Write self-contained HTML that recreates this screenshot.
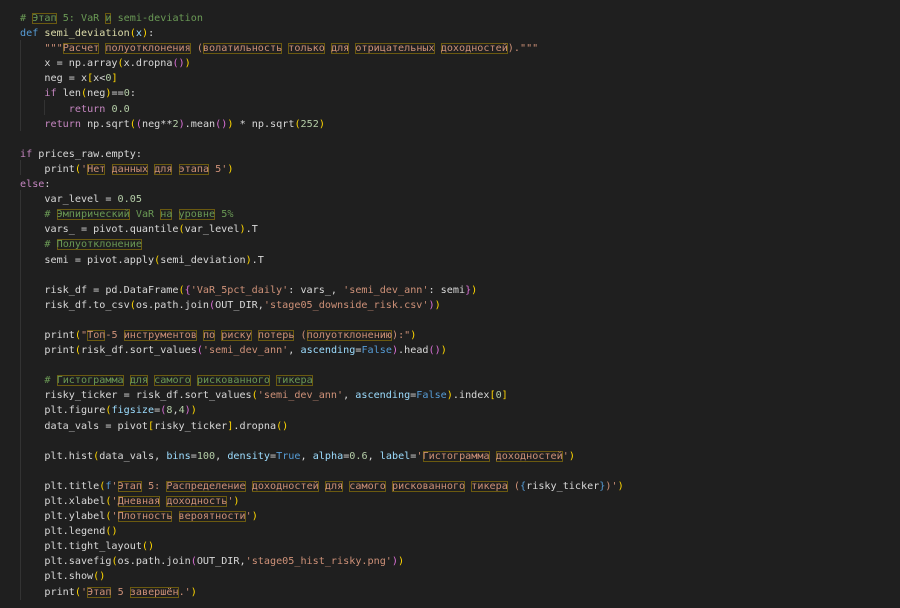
<!DOCTYPE html>
<html><head><meta charset="utf-8"><style>
body{margin:0;background:#1f1f1f;width:900px;height:608px;overflow:hidden}
pre{margin:0;padding:11px 0 0 20px;font-family:"DejaVu Sans Mono","Liberation Mono",monospace;font-size:10.13px;line-height:15.1px;color:#d8d8d8;position:relative}
.k{color:#569cd6}.c{color:#c586c0}.f{color:#dcdcaa}.s{color:#ce9178}.m{color:#6a9955}.n{color:#b5cea8}.p{color:#9cdcfe}
.b1{color:#ffd700}.b2{color:#da70d6}.b3{color:#179fff}
i{font-style:normal;box-shadow:inset 0 0 0 1px #6b5a10}
.g{position:absolute;width:1px;background:#333}
</style></head><body>
<div class="g" style="left:20px;top:40px;height:91px"></div>
<div class="g" style="left:44px;top:100px;height:15px"></div>
<div class="g" style="left:20px;top:160px;height:15px"></div>
<div class="g" style="left:20px;top:190px;height:410px"></div>
<pre><span class="m"># <i>Этап</i> 5: VaR <i>и</i> semi-deviation</span>
<span class="k">def</span> <span class="f">semi_deviation</span><span class="b1">(</span><span class="p">x</span><span class="b1">)</span>:
    <span class="s">"""<i>Расчет</i> <i>полуотклонения</i> (<i>волатильность</i> <i>только</i> <i>для</i> <i>отрицательных</i> <i>доходностей</i>)."""</span>
    x = np.array<span class="b1">(</span>x.dropna<span class="b2">()</span><span class="b1">)</span>
    neg = x<span class="b1">[</span>x&lt;<span class="n">0</span><span class="b1">]</span>
    <span class="c">if</span> len<span class="b1">(</span>neg<span class="b1">)</span>==<span class="n">0</span>:
        <span class="c">return</span> <span class="n">0.0</span>
    <span class="c">return</span> np.sqrt<span class="b1">(</span><span class="b2">(</span>neg**<span class="n">2</span><span class="b2">)</span>.mean<span class="b2">()</span><span class="b1">)</span> * np.sqrt<span class="b1">(</span><span class="n">252</span><span class="b1">)</span>

<span class="c">if</span> prices_raw.empty:
    print<span class="b1">(</span><span class="s">'<i>Нет</i> <i>данных</i> <i>для</i> <i>этапа</i> 5'</span><span class="b1">)</span>
<span class="c">else</span>:
    var_level = <span class="n">0.05</span>
    <span class="m"># <i>Эмпирический</i> VaR <i>на</i> <i>уровне</i> 5%</span>
    vars_ = pivot.quantile<span class="b1">(</span>var_level<span class="b1">)</span>.T
    <span class="m"># <i>Полуотклонение</i></span>
    semi = pivot.apply<span class="b1">(</span>semi_deviation<span class="b1">)</span>.T

    risk_df = pd.DataFrame<span class="b1">(</span><span class="b2">{</span><span class="s">'VaR_5pct_daily'</span>: vars_, <span class="s">'semi_dev_ann'</span>: semi<span class="b2">}</span><span class="b1">)</span>
    risk_df.to_csv<span class="b1">(</span>os.path.join<span class="b2">(</span>OUT_DIR,<span class="s">'stage05_downside_risk.csv'</span><span class="b2">)</span><span class="b1">)</span>

    print<span class="b1">(</span><span class="s">"<i>Топ</i>-5 <i>инструментов</i> <i>по</i> <i>риску</i> <i>потерь</i> (<i>полуотклонению</i>):"</span><span class="b1">)</span>
    print<span class="b1">(</span>risk_df.sort_values<span class="b2">(</span><span class="s">'semi_dev_ann'</span>, <span class="p">ascending</span>=<span class="k">False</span><span class="b2">)</span>.head<span class="b2">()</span><span class="b1">)</span>

    <span class="m"># <i>Гистограмма</i> <i>для</i> <i>самого</i> <i>рискованного</i> <i>тикера</i></span>
    risky_ticker = risk_df.sort_values<span class="b1">(</span><span class="s">'semi_dev_ann'</span>, <span class="p">ascending</span>=<span class="k">False</span><span class="b1">)</span>.index<span class="b1">[</span><span class="n">0</span><span class="b1">]</span>
    plt.figure<span class="b1">(</span><span class="p">figsize</span>=<span class="b2">(</span><span class="n">8</span>,<span class="n">4</span><span class="b2">)</span><span class="b1">)</span>
    data_vals = pivot<span class="b1">[</span>risky_ticker<span class="b1">]</span>.dropna<span class="b1">()</span>

    plt.hist<span class="b1">(</span>data_vals, <span class="p">bins</span>=<span class="n">100</span>, <span class="p">density</span>=<span class="k">True</span>, <span class="p">alpha</span>=<span class="n">0.6</span>, <span class="p">label</span>=<span class="s">'<i>Гистограмма</i> <i>доходностей</i>'</span><span class="b1">)</span>

    plt.title<span class="b1">(</span><span class="k">f</span><span class="s">'<i>Этап</i> 5: <i>Распределение</i> <i>доходностей</i> <i>для</i> <i>самого</i> <i>рискованного</i> <i>тикера</i> (</span><span class="k">{</span>risky_ticker<span class="k">}</span><span class="s">)'</span><span class="b1">)</span>
    plt.xlabel<span class="b1">(</span><span class="s">'<i>Дневная</i> <i>доходность</i>'</span><span class="b1">)</span>
    plt.ylabel<span class="b1">(</span><span class="s">'<i>Плотность</i> <i>вероятности</i>'</span><span class="b1">)</span>
    plt.legend<span class="b1">()</span>
    plt.tight_layout<span class="b1">()</span>
    plt.savefig<span class="b1">(</span>os.path.join<span class="b2">(</span>OUT_DIR,<span class="s">'stage05_hist_risky.png'</span><span class="b2">)</span><span class="b1">)</span>
    plt.show<span class="b1">()</span>
    print<span class="b1">(</span><span class="s">'<i>Этап</i> 5 <i>завершён</i>.'</span><span class="b1">)</span>
</pre>
</body></html>
